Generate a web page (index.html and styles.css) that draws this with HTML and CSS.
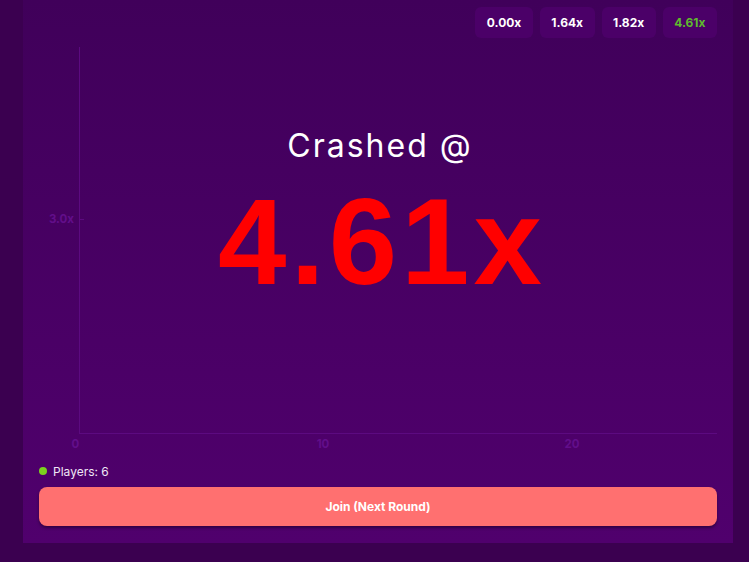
FILE: index.html
```html
<!DOCTYPE html>
<html>
<head>
<meta charset="utf-8">
<link rel="stylesheet" href="styles.css">
</head>
<body>
<div class="page">
  <div class="card">
    <div class="history">
      <span class="hist">0.00x</span>
      <span class="hist">1.64x</span>
      <span class="hist">1.82x</span>
      <span class="hist last">4.61x</span>
    </div>
    <div class="chart">
      <svg class="axes" width="678" height="403" viewBox="0 0 678 403">
        <line x1="40.5" y1="0" x2="40.5" y2="386" stroke="#5c0a80" stroke-width="1"/>
        <line x1="40" y1="386.5" x2="678" y2="386.5" stroke="#5c0a80" stroke-width="1"/>
        <line x1="40" y1="172.5" x2="45" y2="172.5" stroke="#5c0a80" stroke-width="1"/>
        <text class="lbl" x="35" y="176" text-anchor="end">3.0x</text>
        <text class="lbl" x="36.5" y="401" text-anchor="middle">0</text>
        <text class="lbl" x="284" y="401" text-anchor="middle">10</text>
        <text class="lbl" x="533" y="401" text-anchor="middle">20</text>
      </svg>
      <div class="overlay">
        <div class="crashed">Crashed @</div>
        <div class="mult">4.61x</div>
      </div>
    </div>
    <div class="players"><span class="dot"></span>Players: 6</div>
    <button class="join">Join (Next Round)</button>
  </div>
</div>
</body>
</html>
```
FILE: styles.css
```css
html, body {
  margin: 0;
  padding: 0;
  background: #3b0050;
  font-family: "Inter", "Open Sans", sans-serif;
}
.page {
  width: 749px;
  height: 562px;
  padding: 0 16px 0 23px;
  box-sizing: border-box;
}
.card {
  width: 710px;
  height: 543px;
  box-sizing: border-box;
  padding: 7px 16px 17px 16px;
  background: linear-gradient(180deg, #40005a 0%, #50006d 100%);
  display: flex;
  flex-direction: column;
}
.history {
  display: flex;
  justify-content: flex-end;
  gap: 7px;
  height: 31px;
}
.hist {
  height: 31px;
  padding: 0 11.5px;
  border-radius: 6px;
  background: #4b0068;
  color: #ffffff;
  font-size: 12px;
  font-weight: 700;
  display: flex;
  align-items: center;
}
.hist.last {
  color: #5fba2e;
}
.chart {
  position: relative;
  margin-top: 9px;
  height: 403px;
}
.axes {
  display: block;
}
.lbl {
  font-family: "Inter", sans-serif;
  font-size: 11.5px;
  font-weight: 700;
  fill: #620e8a;
}
.overlay {
  position: absolute;
  left: 0;
  right: 0;
  top: 75px;
  display: flex;
  flex-direction: column;
  align-items: center;
  padding-left: 2px;
}
.crashed {
  color: #ffffff;
  font-size: 32px;
  font-weight: 400;
  line-height: 48px;
  letter-spacing: 2px;
  padding-left: 2px;
}
.mult {
  color: #ff0000;
  font-family: "Liberation Sans", Arial, sans-serif;
  font-weight: 700;
  font-size: 123px;
  line-height: 112px;
  margin-top: 16px;
  letter-spacing: 4px;
  padding-left: 6px;
}
.players {
  display: flex;
  align-items: center;
  height: 16px;
  margin-top: 13px;
  color: #efe6f5;
  font-size: 12px;
}
.dot {
  width: 8px;
  height: 8px;
  border-radius: 50%;
  background: #7bd21e;
  margin: 0 6px 0 0;
}
.join {
  margin-top: 8px;
  height: 39px;
  border: none;
  border-radius: 8px;
  background: #ff7070;
  color: #ffffff;
  font-family: "Inter", sans-serif;
  font-size: 12px;
  font-weight: 700;
  box-shadow: 0 2px 3px rgba(30, 0, 40, 0.6);
  width: 100%;
}
```
